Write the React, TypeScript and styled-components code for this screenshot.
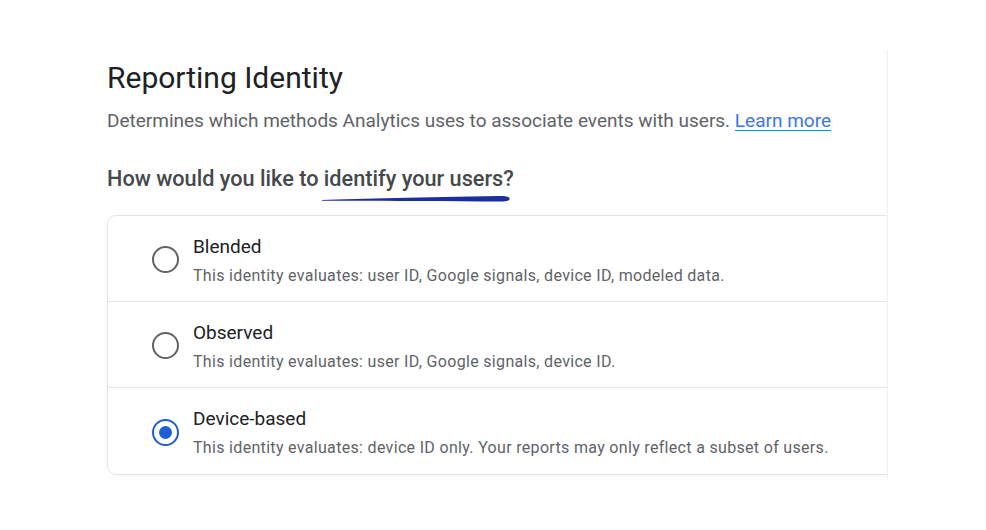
import React from "react";
import styled, { createGlobalStyle } from "styled-components";

const Global = createGlobalStyle`
  html, body { margin: 0; padding: 0; background: #ffffff; }
  body { font-family: Roboto, "Noto Sans", Arial, sans-serif; -webkit-font-smoothing: antialiased; }
  #root { width: 986px; height: 530px; overflow: hidden; }
`;

const Page = styled.div`
  width: 986px;
  height: 530px;
  padding-top: 50px;
  box-sizing: border-box;
  background: #ffffff;
`;

const Panel = styled.div`
  width: 888px;
  height: 430px;
  box-sizing: border-box;
  border-right: 1px solid #efefef;
  background: #fefefe;
  overflow: hidden;
  padding-left: 107px;
  display: flex;
  flex-direction: column;
`;

const Title = styled.h1`
  margin: 11px 0 0 0;
  font-size: 30px;
  line-height: 34px;
  font-weight: 400;
  color: #202124;
  letter-spacing: 0;
`;

const Description = styled.p`
  margin: 14px 0 0 0;
  font-size: 19px;
  line-height: 24px;
  color: #5f6368;
`;

const Link = styled.a`
  color: #3b78e7;
  text-decoration: underline;
  text-underline-offset: 3px;
`;

const QuestionWrap = styled.div`
  position: relative;
  margin-top: 33px;
`;

const Question = styled.h2`
  margin: 0;
  font-size: 21.7px;
  line-height: 26px;
  font-weight: 500;
  color: #45484c;
`;

const Scribble = styled.svg`
  position: absolute;
  left: 214px;
  top: 27px;
`;

const Card = styled.div`
  margin-top: 23px;
  width: 820px;
  border: 1px solid #e4e4e4;
  border-radius: 9px;
  background: #ffffff;
`;

const Row = styled.label<{ $last?: boolean }>`
  display: flex;
  align-items: center;
  height: 86px;
  box-sizing: border-box;
  padding-left: 44px;
  border-bottom: ${(p) => (p.$last ? "none" : "1px solid #e6e6e6")};
`;

const Radio = styled.span<{ $checked?: boolean }>`
  width: 23px;
  height: 23px;
  border-radius: 50%;
  border: 2px solid ${(p) => (p.$checked ? "#1f5fd6" : "#5f6368")};
  display: flex;
  align-items: center;
  justify-content: center;
  margin-top: 2px;
  flex-shrink: 0;
  &::after {
    content: "";
    width: 13px;
    height: 13px;
    border-radius: 50%;
    background: ${(p) => (p.$checked ? "#1f5fd6" : "transparent")};
  }
`;

const Texts = styled.div`
  margin-left: 14px;
  display: flex;
  flex-direction: column;
  gap: 8px;
  margin-top: 3px;
`;

const OptionTitle = styled.div`
  font-size: 19px;
  line-height: 23px;
  color: #202124;
`;

const OptionDesc = styled.div`
  font-size: 16px;
  line-height: 20px;
  color: #5f6368;
  letter-spacing: 0.32px;
`;

const options = [
  { title: "Blended", desc: "This identity evaluates: user ID, Google signals, device ID, modeled data." },
  { title: "Observed", desc: "This identity evaluates: user ID, Google signals, device ID." },
  { title: "Device-based", desc: "This identity evaluates: device ID only. Your reports may only reflect a subset of users.", checked: true },
];

export default function App() {
  return (
    <>
      <Global />
      <Page>
        <Panel>
          <Title>Reporting Identity</Title>
          <Description>
            Determines which methods Analytics uses to associate events with users. <Link href="#">Learn more</Link>
          </Description>
          <QuestionWrap>
            <Question>How would you like to identify your users?</Question>
            <Scribble width="192" height="12" viewBox="0 0 192 12">
              <path
                d="M1 7 C 40 5.6, 100 4.4, 178 3 C 187 2.6, 190 4.5, 188 7 C 186 9, 178 8.6, 160 8.4 C 110 8.2, 50 8.0, 1 7.8 Z"
                fill="#1c2e9c"
              />
            </Scribble>
          </QuestionWrap>
          <Card>
            {options.map((o, i) => (
              <Row key={o.title} $last={i === options.length - 1}>
                <Radio $checked={o.checked} />
                <Texts>
                  <OptionTitle>{o.title}</OptionTitle>
                  <OptionDesc>{o.desc}</OptionDesc>
                </Texts>
              </Row>
            ))}
          </Card>
        </Panel>
      </Page>
    </>
  );
}
